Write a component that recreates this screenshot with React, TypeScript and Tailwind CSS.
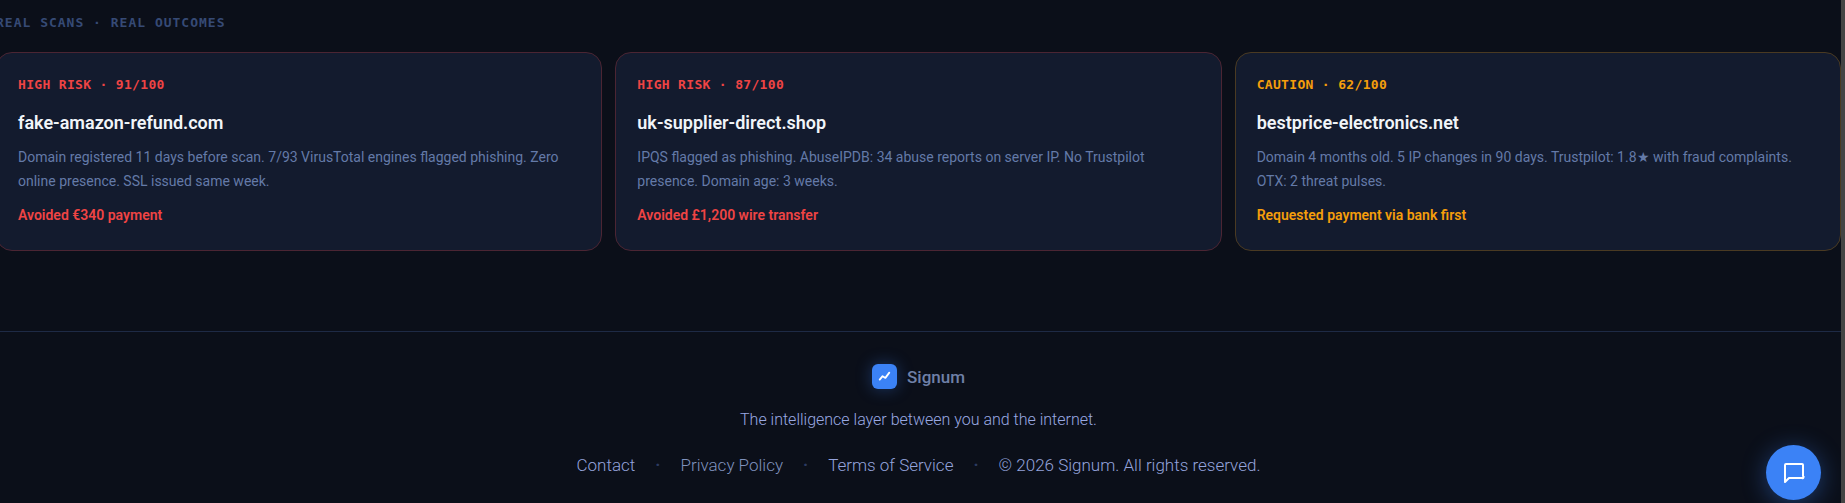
import { Fragment } from "react";

type Scan = {
  verdict: string;
  domain: string;
  details: string;
  outcome: string;
  level: "high" | "caution";
};

const scans: Scan[] = [
  {
    verdict: "HIGH RISK · 91/100",
    domain: "fake-amazon-refund.com",
    details:
      "Domain registered 11 days before scan. 7/93 VirusTotal engines flagged phishing. Zero online presence. SSL issued same week.",
    outcome: "Avoided €340 payment",
    level: "high",
  },
  {
    verdict: "HIGH RISK · 87/100",
    domain: "uk-supplier-direct.shop",
    details:
      "IPQS flagged as phishing. AbuseIPDB: 34 abuse reports on server IP. No Trustpilot presence. Domain age: 3 weeks.",
    outcome: "Avoided £1,200 wire transfer",
    level: "high",
  },
  {
    verdict: "CAUTION · 62/100",
    domain: "bestprice-electronics.net",
    details:
      "Domain 4 months old. 5 IP changes in 90 days. Trustpilot: 1.8★ with fraud complaints. OTX: 2 threat pulses.",
    outcome: "Requested payment via bank first",
    level: "caution",
  },
];

const links = [
  { label: "Contact", color: "text-[#94a3dc]" },
  { label: "Privacy Policy", color: "text-[#7f91bd]" },
  { label: "Terms of Service", color: "text-[#94a3dc]" },
];

const levels = {
  high: { border: "border-[#4b2533]", text: "text-[#ef4444]" },
  caution: { border: "border-[#4a3a22]", text: "text-[#f59e0b]" },
};

function ScanCard({ scan }: { scan: Scan }) {
  const { border, text } = levels[scan.level];
  return (
    <article className={`rounded-2xl border bg-[#131b2e] px-[21px] py-6 ${border}`}>
      <p className={`font-['DejaVu_Sans_Mono',monospace] text-[13px] leading-4 font-bold tracking-wide ${text}`}>
        {scan.verdict}
      </p>
      <h3 className="mt-4 text-lg leading-7 font-semibold text-[#f1f5f9]">{scan.domain}</h3>
      <p className="mt-2 text-sm leading-6 text-[#647aa8]">{scan.details}</p>
      <p className={`mt-3 mb-px text-sm leading-5 font-semibold ${text}`}>{scan.outcome}</p>
    </article>
  );
}

function Logo() {
  return (
    <span className="flex size-[25px] items-center justify-center rounded-md bg-[#3b82f6] shadow-[0_0_16px_rgba(59,130,246,0.35)]">
      <svg viewBox="0 0 25 25" className="size-full" fill="none" stroke="white" strokeWidth="1.8" strokeLinecap="round" strokeLinejoin="round" aria-hidden="true">
        <path d="M7.7 15.6 10.6 12.2 13.4 13.9 17.3 8.6" />
      </svg>
    </span>
  );
}

export default function App() {
  return (
    <div className="flex min-h-screen overflow-hidden bg-[#0b0f19] font-['Roboto',sans-serif]">
      <div className="-ml-1 flex flex-1 flex-col">
        <main className="pt-[14px]">
          <h2 className="font-['DejaVu_Sans_Mono',monospace] text-[13px] leading-[18px] font-bold tracking-[1px] text-[#364a75]">
            REAL SCANS · REAL OUTCOMES
          </h2>
          <div className="mt-5 grid grid-cols-3 gap-[13px]">
            {scans.map((scan) => (
              <ScanCard key={scan.domain} scan={scan} />
            ))}
          </div>
        </main>

        <footer className="mt-20 flex flex-col items-center border-t border-[#1e2a45] pt-8 pb-7">
          <div className="flex items-center gap-[10px]">
            <Logo />
            <span className="text-[17px] leading-6 font-medium text-[#6f80a8]">Signum</span>
          </div>
          <p className="mt-5 text-base leading-[22px] font-light text-[#9aa9e2]">
            The intelligence layer between you and the internet.
          </p>
          <div className="mt-6 flex items-center gap-5 text-[17px] leading-5 font-light">
            {links.map((link) => (
              <Fragment key={link.label}>
                <a href="#" className={link.color}>
                  {link.label}
                </a>
                <span className="font-bold text-[#2c3b62]">·</span>
              </Fragment>
            ))}
            <span className="text-[#94a3dc]">© 2026 Signum. All rights reserved.</span>
          </div>
        </footer>
      </div>

      <div className="w-1 bg-[#444444]" />

      <button
        type="button"
        aria-label="Open chat"
        className="fixed right-6 bottom-[3px] flex size-[55px] items-center justify-center rounded-full bg-[#3b82f6] shadow-[0_4px_24px_rgba(59,130,246,0.4)]"
      >
        <svg viewBox="0 0 24 24" className="size-6" fill="none" stroke="white" strokeWidth="2" strokeLinecap="round" strokeLinejoin="round" aria-hidden="true">
          <path d="M21 15a1 1 0 0 1-1 2H7l-4 4V4a1 1 0 0 1 1-1h16a1 1 0 0 1 1 1z" />
        </svg>
      </button>
    </div>
  );
}
